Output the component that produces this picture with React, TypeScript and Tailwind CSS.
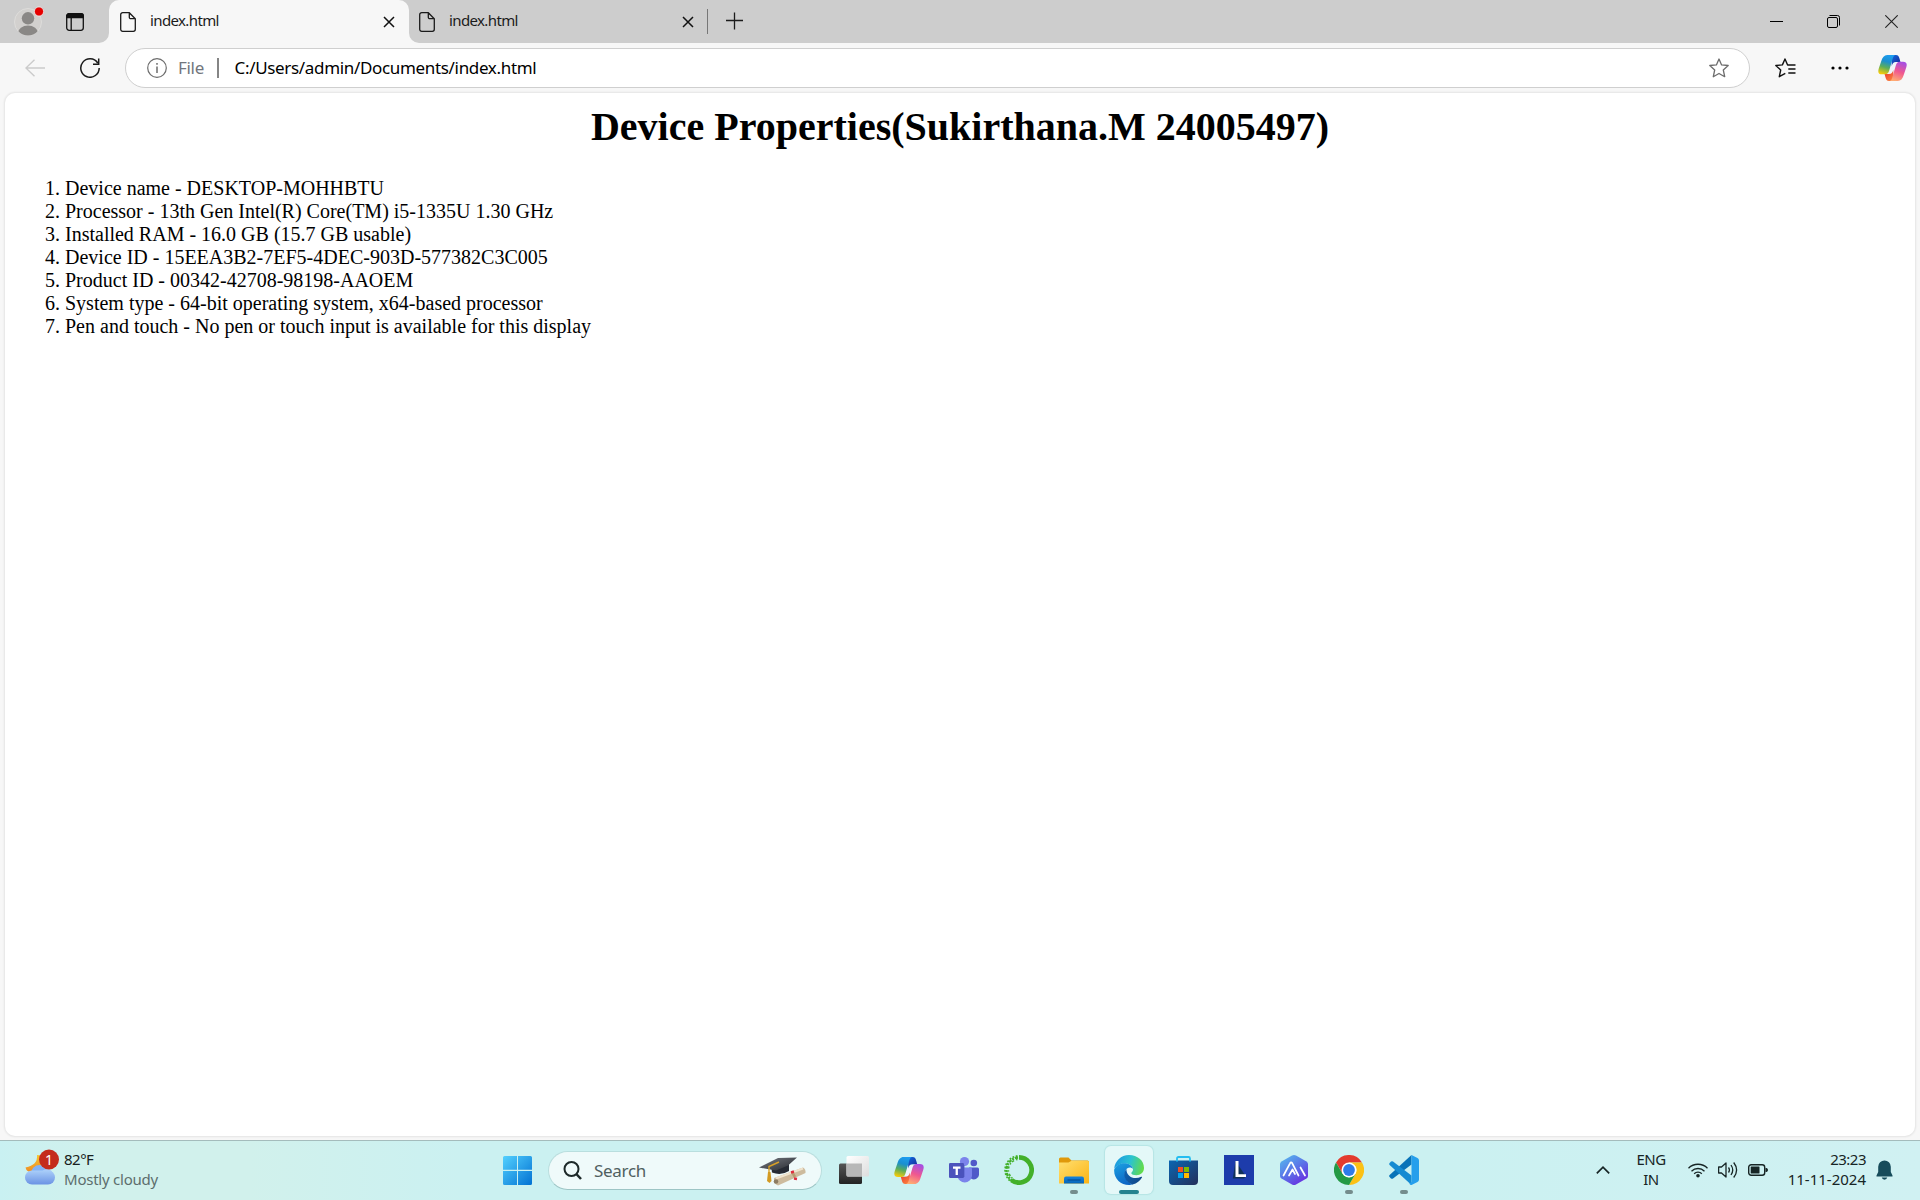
import type { ReactNode } from "react";

const UI = "font-['Noto_Sans',sans-serif]";

function CopilotIcon({ id, className }: { id: string; className: string }) {
  return (
    <svg viewBox="0 0 30 28" className={className} fill="none">
      <defs>
        <linearGradient id={id + "a"} x1="10" y1="0" x2="4" y2="20" gradientUnits="userSpaceOnUse">
          <stop offset="0" stopColor="#1d9df0" />
          <stop offset=".35" stopColor="#1b8fd0" />
          <stop offset=".65" stopColor="#5cae5a" />
          <stop offset="1" stopColor="#f6cb0a" />
        </linearGradient>
        <linearGradient id={id + "b"} x1="24" y1="8" x2="17" y2="27" gradientUnits="userSpaceOnUse">
          <stop offset="0" stopColor="#a84fe0" />
          <stop offset=".5" stopColor="#f0588f" />
          <stop offset="1" stopColor="#ffab72" />
        </linearGradient>
        <linearGradient id={id + "c"} x1="15" y1="0" x2="22" y2="7" gradientUnits="userSpaceOnUse">
          <stop offset="0" stopColor="#1268dc" />
          <stop offset="1" stopColor="#1637a8" />
        </linearGradient>
        <linearGradient id={id + "d"} x1="8" y1="19" x2="14" y2="27" gradientUnits="userSpaceOnUse">
          <stop offset="0" stopColor="#ee4030" />
          <stop offset="1" stopColor="#f9803f" />
        </linearGradient>
      </defs>
      <path d="M12 8.500H19L17.500 19.500H11Z" fill="#eef4fb" />
      <path d="M14 .5H18.500C21 .5 21.600 2 22.300 4.500L23.200 7.800H18.500C16 7.800 15 9 14.200 12Z" fill={`url(#${id}c)`} />
      <path d="M16 27.500H11.500C9 27.500 8.400 26 7.700 23.500L6.800 20.200H11.500C14 20.200 15 19 15.800 16Z" fill={`url(#${id}d)`} />
      <path d="M18 .5H9.500C6.500 .5 4.500 3 3.500 6.500L.8 14.500C-.6 18.800 1 20.500 4 20.500H7.500C9.800 20.500 10.800 19 11.500 16.800L15 5C15.700 2.500 16.300 .9 18 .5Z" fill={`url(#${id}a)`} />
      <path d="M12 27.500H20.500C23.500 27.500 25.500 25 26.500 21.500L29.200 13.500C30.600 9.200 29 7.500 26 7.500H22.500C20.200 7.500 19.200 9 18.500 11.200L15 23C14.300 25.500 13.700 27.100 12 27.500Z" fill={`url(#${id}b)`} />
    </svg>
  );
}

function FileIcon() {
  return (
    <svg viewBox="0 0 16 20" className="mt-px h-5 w-4 shrink-0" fill="none" stroke="#1b1b1b" strokeWidth="1.300">
      <path d="M2.700 .7H9.300L15.300 6.700V17.300A2 2 0 0 1 13.300 19.300H2.700A2 2 0 0 1 .7 17.300V2.700A2 2 0 0 1 2.700 .7ZM9.300 .7V5.200A1.500 1.500 0 0 0 10.800 6.700H15.300" />
    </svg>
  );
}

function TabClose() {
  return (
    <svg viewBox="0 0 12 12" className="h-3 w-3 shrink-0" stroke="#111" strokeWidth="1.500">
      <path d="M1 1 11 11M11 1 1 11" />
    </svg>
  );
}

function TabStrip() {
  return (
    <div className="flex h-[43px] bg-[#cdcdcd]">
      <div className="flex w-[109px] items-center rounded-br-[10px]">
        <svg viewBox="0 0 32 32" className="ml-[13px] h-8 w-8 shrink-0">
          <clipPath id="avatar"><circle cx="15" cy="16" r="13.500" /></clipPath>
          <circle cx="15" cy="16" r="13.500" fill="#d2d0ce" stroke="#dedddb" />
          <circle cx="15" cy="12.300" r="6.200" fill="#8a8886" />
          <ellipse cx="15" cy="27" rx="10" ry="7.500" fill="#8a8886" clipPath="url(#avatar)" />
          <circle cx="26" cy="5.500" r="4.600" fill="#e60000" stroke="#eee" strokeWidth=".8" />
        </svg>
        <svg viewBox="0 0 18 18" className="ml-[21px] h-[18px] w-[18px] shrink-0" fill="none" stroke="#111" strokeWidth="1.300">
          <rect x=".7" y=".7" width="16.600" height="16.600" rx="2.500" />
          <path d="M.7 4.500V3A2.300 2.300 0 0 1 3 .7H15A2.300 2.300 0 0 1 17.300 3V4.500Z" fill="#111" />
          <path d="M5.200 4V17" />
        </svg>
      </div>
      <div className="relative flex w-[300px] items-center rounded-t-[10px] bg-[#f7f7f7] pr-[14px] pl-[11px]">
        <svg viewBox="0 0 10 10" className="absolute bottom-0 -left-[10px] h-[10px] w-[10px]" fill="#f7f7f7"><path d="M10 0V10H0A10 10 0 0 0 10 0Z" /></svg>
        <svg viewBox="0 0 10 10" className="absolute -right-[10px] bottom-0 h-[10px] w-[10px]" fill="#f7f7f7"><path d="M0 0V10H10A10 10 0 0 1 0 0Z" /></svg>
        <FileIcon />
        <span className={`${UI} ml-[14px] flex-1 pb-[2px] text-[15px] tracking-[-0.620px] text-[#1b1b1b]`}>index.html</span>
        <TabClose />
      </div>
      <div className="flex w-[298px] items-center pr-[13px] pl-[10px]">
        <FileIcon />
        <span className={`${UI} ml-[14px] flex-1 pb-[2px] text-[15px] tracking-[-0.620px] text-[#1b1b1b]`}>index.html</span>
        <TabClose />
      </div>
      <div className="mt-[9px] h-[25px] w-px bg-[#777]" />
      <svg viewBox="0 0 18 18" className="mt-3 ml-[18px] h-[18px] w-[18px]" stroke="#1b1b1b" strokeWidth="1.300"><path d="M8.500 .5V17.500M0 8.500H17" /></svg>
      <div className="ml-auto flex items-center gap-[44px] pr-[22px]">
        <svg viewBox="0 0 13 13" className="-ml-px h-[13px] w-[13px]" stroke="#000"><path d="M0 6.500H13" /></svg>
        <svg viewBox="0 0 13 13" className="h-[13px] w-[13px]" fill="none" stroke="#000">
          <rect x=".5" y="2.500" width="10" height="10" rx="1.500" />
          <path d="M2.500 .5H10.500A2 2 0 0 1 12.500 2.500V10.500" />
        </svg>
        <svg viewBox="0 0 13 13" className="ml-px h-[13px] w-[13px]" stroke="#222" strokeWidth="1.100"><path d="M.3 .3 12.700 12.700M12.700 .3 .3 12.700" /></svg>
      </div>
    </div>
  );
}

function Toolbar() {
  return (
    <div className="flex h-[49px] items-center pt-px">
      <svg viewBox="0 0 20 18" className="ml-[25px] h-[18px] w-5" fill="none" stroke="#cbcbcb" strokeWidth="1.400"><path d="M9.500 .7 .9 9 9.500 17.300M.9 9H20" /></svg>
      <svg viewBox="0 0 20 20" className="ml-[35px] h-5 w-5" fill="none" stroke="#1b1b1b" strokeWidth="1.500">
        <path d="M17.700 5A9.200 9.200 0 1 0 19.200 10M18.700 .5V6.200H13" />
      </svg>
      <div className="ml-[25px] flex h-10 w-[1625px] items-center rounded-full border border-[#cfcfcf] bg-white pr-5 pl-[21px]">
        <svg viewBox="0 0 20 20" className="h-5 w-5" fill="none" stroke="#6c6c6c" strokeWidth="1.200">
          <circle cx="10" cy="10" r="9.300" />
          <path d="M10 8.500V15M10 5V6.700" strokeWidth="1.500" />
        </svg>
        <span className={`${UI} ml-[11px] w-[27px] text-[17px] tracking-[-0.300px] whitespace-nowrap text-[#72767d]`}>File</span>
        <div className="ml-[12px] h-5 w-[1.500px] bg-[#858585]" />
        <span className={`${UI} ml-[16px] flex-1 text-[17px] tracking-[-0.330px] text-black`}>C:/Users/admin/Documents/index.html</span>
        <svg viewBox="0 0 20 20" className="h-5 w-5" fill="none" stroke="#6c6c6c" strokeWidth="1.300" strokeLinejoin="round">
          <path d="M10 1 12.600 6.900 19.200 7.500 14.300 12 15.700 18.700 10 15.500 4.300 18.700 5.700 12 .8 7.500 7.400 6.900Z" />
        </svg>
      </div>
      <svg viewBox="0 0 21 20" className="ml-[25px] h-5 w-[21px]" fill="none" stroke="#111" strokeWidth="1.400" strokeLinejoin="round">
        <path d="M13.200 7H12.600L10 1 7.400 6.900 .8 7.500 5.700 12 4.300 18.700 10.300 15.400M12.500 7H20.500M13.300 11H20.500M13.300 15H20.500" />
      </svg>
      <svg viewBox="0 0 18 4" className="ml-[35px] h-1 w-[18px]"><circle cx="2" cy="2" r="1.600" /><circle cx="9" cy="2" r="1.600" /><circle cx="16" cy="2" r="1.600" /></svg>
      <CopilotIcon id="top" className="ml-[29px] h-[28px] w-[29px]" />
    </div>
  );
}

const properties = [
  "Device name - DESKTOP-MOHHBTU",
  "Processor - 13th Gen Intel(R) Core(TM) i5-1335U 1.30 GHz",
  "Installed RAM - 16.0 GB (15.7 GB usable)",
  "Device ID - 15EEA3B2-7EF5-4DEC-903D-577382C3C005",
  "Product ID - 00342-42708-98198-AAOEM",
  "System type - 64-bit operating system, x64-based processor",
  "Pen and touch - No pen or touch input is available for this display",
];

function Page() {
  return (
    <main className="mx-[5px] h-[1043px] rounded-[10px] bg-white px-[10px] pt-[11px] font-['Liberation_Serif',serif] text-black shadow-[0_0_2px_1px_rgba(0,0,0,0.080)]">
      <h1 className="text-center text-[40px] leading-[46px] font-bold">Device Properties(Sukirthana.M 24005497)</h1>
      <ol className="mt-[27px] list-decimal pl-[50px] text-[20px] leading-[23px]">
        {properties.map((p) => <li key={p}>{p}</li>)}
      </ol>
    </main>
  );
}

function TaskButton({ children, indicator, active }: { children: ReactNode; indicator?: boolean; active?: boolean }) {
  return (
    <div className={`relative flex h-12 w-12 items-center justify-center rounded-[6px] ${active ? "bg-[#e4f8f8] shadow-[0_0_1px_1px_rgba(120,190,190,0.250)]" : ""}`}>
      {children}
      {indicator && <span className={`absolute bottom-0 h-1 rounded-full ${active ? "w-5 bg-[#24828f]" : "w-2 bg-[#748c8c]"}`} />}
    </div>
  );
}

function TaskApps() {
  return (
    <div className="ml-[8px] flex gap-[7px]">
      <TaskButton>
        <svg viewBox="0 0 30 30" className="h-[30px] w-[30px]">
          <defs>
            <linearGradient id="tvd" x2="0" y2="1"><stop stopColor="#555" /><stop offset="1" stopColor="#232323" /></linearGradient>
            <linearGradient id="tvl" x2="1" y2="1"><stop stopColor="#fff" /><stop offset="1" stopColor="#ddd" /></linearGradient>
          </defs>
          <rect y="8.500" width="23" height="20.500" rx="1.500" fill="url(#tvd)" />
          <rect x="7.500" y="1" width="22.500" height="20.500" rx="1.500" fill="url(#tvl)" />
          <path d="M7.500 8.500H23V21.500H9Q7.500 21.500 7.500 20Z" fill="#b7b7b7" />
        </svg>
      </TaskButton>
      <TaskButton><CopilotIcon id="task" className="h-[29px] w-[30px]" /></TaskButton>
      <TaskButton>
        <svg viewBox="0 0 30 28" className="h-7 w-[30px]">
          <circle cx="24.800" cy="7" r="3.300" fill="#5059c9" />
          <path d="M20 11.500H28.500Q30 11.500 30 13V19A5 5 0 0 1 22 22.500Z" fill="#5059c9" />
          <circle cx="15.500" cy="5.500" r="4.600" fill="#7b83eb" />
          <path d="M9 11.500H21.500Q23 11.500 23 13V20A7.300 7.300 0 0 1 8.500 20Z" fill="#7b83eb" />
          <path d="M9 9H15.500V21H9Z" fill="#5961c8" />
          <rect y="7" width="15" height="15" rx="1.200" fill="#4b53bc" />
          <path d="M4 10.500H11.500V12.700H8.900V19H6.600V12.700H4Z" fill="#fff" />
        </svg>
      </TaskButton>
      <TaskButton>
        <svg viewBox="0 0 30 30" className="h-[30px] w-[30px]" fill="none" stroke="#43b02a">
          <path d="M15 2.400A12.600 12.600 0 1 1 7.500 25.100" strokeWidth="4.700" />
          <path d="M14 2.500A12.600 12.600 0 0 0 8 25.500" strokeWidth="2.400" strokeDasharray="3.200 1.100 2 .9" />
          <path d="M13.500 .9A14.200 14.200 0 0 0 6 25.800" strokeWidth="1.600" strokeDasharray="1.800 1.600" />
          <path d="M13.500 4.500A10.600 10.600 0 0 0 9 23.700" strokeWidth="1.500" strokeDasharray="1.400 2.200 2.400 1.600" />
        </svg>
      </TaskButton>
      <TaskButton indicator>
        <svg viewBox="0 0 30 27" className="h-[27px] w-[30px]">
          <defs><linearGradient id="fold" x2="1" y2="1"><stop stopColor="#ffdf70" /><stop offset="1" stopColor="#fbb414" /></linearGradient>
          <linearGradient id="foldb" x2="0" y2="1"><stop stopColor="#1683dc" /><stop offset="1" stopColor="#0665b8" /></linearGradient></defs>
          <path d="M0 2Q0 .5 1.500 .5H9.500L12.500 3.500H28.500Q30 3.500 30 5V10H0Z" fill="#e0990b" />
          <path d="M0 5.500H9.500L12.500 3.800H28.500Q30 3.800 30 5.500V26.500H0Z" fill="url(#fold)" />
          <path d="M5 26.500V21.500Q5 19.500 7 19.500H23Q25 19.500 25 21.500V26.500Z" fill="url(#foldb)" />
          <path d="M8.500 23H21.500" stroke="#064f96" strokeWidth="1.200" />
        </svg>
      </TaskButton>
      <TaskButton indicator active>
        <svg viewBox="0 0 30 30" className="h-[30px] w-[30px]">
          <defs>
            <linearGradient id="eg" x1="2" y1="6" x2="29" y2="14" gradientUnits="userSpaceOnUse"><stop stopColor="#1d9ce0" /><stop offset=".5" stopColor="#2bc3d0" /><stop offset="1" stopColor="#63dc48" /></linearGradient>
            <linearGradient id="eb" x1="4" y1="8" x2="14" y2="29" gradientUnits="userSpaceOnUse"><stop stopColor="#1b9ee0" /><stop offset="1" stopColor="#0b63c4" /></linearGradient>
            <linearGradient id="ed" x1="10" y1="18" x2="26" y2="24" gradientUnits="userSpaceOnUse"><stop stopColor="#0d5fb0" /><stop offset="1" stopColor="#114a8b" /></linearGradient>
          </defs>
          <path d="M.2 13.500C1 6 7 0 15 0 23.500 0 30 5.500 30 13 30 17.500 26.500 20.200 22.500 20.200 19.500 20.200 17.300 19.300 17.300 18.200 17.300 17.200 19 16.800 19 14.500 19 11 15.500 8.500 11 8.500 6 8.500 2.500 10.500 .2 13.500Z" fill="url(#eg)" />
          <path d="M.2 14.500C1.500 11 5.500 8.300 10.500 8.300 15 8.300 18.500 10.800 19 14 17.500 12 15 12 13 13.500 9.500 16.500 9.500 26 19 29.300 17.500 29.900 16 30 15 30 6.500 30-.5 23 .2 14.500Z" fill="url(#eb)" />
          <path d="M12.500 14C8.500 18 9.500 26.500 18.500 29.400 23 28.300 26.200 25.500 28 22.400 28.300 21.700 27.800 21.500 27.200 21.800 20 25.300 12 21.300 12.500 14Z" fill="url(#ed)" />
        </svg>
      </TaskButton>
      <TaskButton>
        <svg viewBox="0 0 30 30" className="h-[30px] w-[30px]">
          <defs><linearGradient id="st" x2="1" y2="1"><stop stopColor="#0a66b2" /><stop offset="1" stopColor="#24305a" /></linearGradient></defs>
          <path d="M0 5.500H29V26A4 4 0 0 1 25 30H4A4 4 0 0 1 0 26Z" fill="url(#st)" />
          <path d="M8 6.500V3.500Q8 2 9.500 2H19.500Q21 2 21 3.500V6.500" fill="none" stroke="#23bdf0" strokeWidth="1.800" />
          <path d="M9 12H14V17H9Z" fill="#f25022" /><path d="M15 12H20V17H15Z" fill="#7fba00" />
          <path d="M9 18H14V23H9Z" fill="#00a4ef" /><path d="M15 18H20V23H15Z" fill="#ffb900" />
        </svg>
      </TaskButton>
      <TaskButton>
        <svg viewBox="0 0 30 30" className="h-[30px] w-[30px]">
          <path d="M0 0H30V30H0Z" fill="#1d3cab" />
          <path d="M11.500 6 8.800 23.500H20L22 21.500Z" fill="#103158" />
          <path d="M11.500 6H14.500V19.200H22V22H11.500Z" fill="#fff" />
        </svg>
      </TaskButton>
      <TaskButton>
        <svg viewBox="0 0 28 30" className="h-[30px] w-7">
          <defs><linearGradient id="hex" x1=".1" x2=".8" y2="1"><stop stopColor="#55b9ed" /><stop offset=".5" stopColor="#5b75e8" /><stop offset="1" stopColor="#6a29e0" /></linearGradient></defs>
          <path d="M12 .5Q14-.5 16 .5L26.500 6.500Q28 7.500 28 9V21Q28 22.500 26.500 23.500L16 29.500Q14 30.500 12 29.500L1.500 23.500Q0 22.500 0 21V9Q0 7.500 1.500 6.500Z" fill="url(#hex)" />
          <path d="M3.500 20.500 10 8.300Q11 6.300 12.300 8.300L18.500 20.500M9 20.500 12.500 14.500 15 19M20.500 12.500 25 20.500" fill="none" stroke="#fff" strokeWidth="1.700" strokeLinecap="round" strokeLinejoin="round" />
        </svg>
      </TaskButton>
      <TaskButton indicator>
        <svg viewBox="0 0 30 30" className="h-[30px] w-[30px]">
          <path d="M2 7.500A15 15 0 0 1 28 7.500H15L8.500 18.700Z" fill="#e33b2e" />
          <path d="M28 7.500A15 15 0 0 1 15 30L21.500 18.700A7.500 7.500 0 0 0 21.500 11.300L15 7.500Z" fill="#fbc116" />
          <path d="M2 7.500A15 15 0 0 0 15 30L21.500 18.700 15 22.500 8.500 18.700Z" fill="#249a45" />
          <circle cx="15" cy="15" r="7.500" fill="#fff" /><circle cx="15" cy="15" r="5.900" fill="#2f7bea" />
        </svg>
      </TaskButton>
      <TaskButton indicator>
        <svg viewBox="0 0 30 30" className="h-[30px] w-[30px]">
          <path d="M22.500 0V9.500L4 23.500Q3 24.200 2 23.400L.6 22Q-.3 21 .6 20Z" fill="#0873b8" />
          <path d="M.6 8Q-.2 9 .6 10L22.500 30V20.500L4 6.500Q3 5.800 2 6.600Z" fill="#158bd2" />
          <path d="M22.500 0 28.500 2.900Q30 3.700 30 5.500V24.500Q30 26.300 28.500 27.100L22.500 30Q21 30 20.300 28.500L22.500 27Z" fill="#269fec" />
        </svg>
      </TaskButton>
    </div>
  );
}

function Taskbar() {
  return (
    <div className={`${UI} flex h-[60px] items-center border-t border-[#a4bcbc] bg-[linear-gradient(90deg,#c9f1f2_0%,#d1f1ec_5%,#d1f1ec_13%,#cbf1f1_24%,#cbf1f1_75%,#d0f1f2_100%)] pb-px`}>
      <div className="flex w-[502px] items-center pl-[24px]">
        <svg viewBox="0 0 36 38" className="mb-[6px] h-[38px] w-9 shrink-0">
          <defs>
            <linearGradient id="cl" x2="0" y2="1"><stop stopColor="#a9cef9" /><stop offset="1" stopColor="#6b93e4" /></linearGradient>
            <linearGradient id="mn" x2="0" y2="1"><stop stopColor="#f7c52e" /><stop offset="1" stopColor="#ed8b24" /></linearGradient>
          </defs>
          <path d="M13 7Q14 17 1.500 19.500 2.500 24 8 24.500L22 20V8Z" fill="url(#mn)" />
          <circle cx="15.500" cy="25.500" r="8.500" fill="#83b2f4" /><circle cx="23" cy="27.500" r="6.500" fill="#a9caf8" />
          <rect x="1" y="22.500" width="30" height="14" rx="7" fill="url(#cl)" />
          <circle cx="25" cy="11.500" r="10" fill="#c42b1c" />
          <text x="25" y="16.500" textAnchor="middle" fill="#fff" fontSize="14" fontFamily="Noto Sans">1</text>
        </svg>
        <div className="mb-[3px] ml-[4px] text-[15px] leading-5">
          <div className="tracking-[-0.500px] text-[#182020]">82°F</div>
          <div className="tracking-[-0.230px] text-[#5d6e6d]">Mostly cloudy</div>
        </div>
      </div>
      <svg viewBox="0 0 30 30" className="ml-px h-[30px] w-[30px]">
        <defs><linearGradient id="win" x1="0" y1="0" x2="30" y2="30" gradientUnits="userSpaceOnUse"><stop stopColor="#55d2ff" /><stop offset="1" stopColor="#0070d2" /></linearGradient></defs>
        <path d="M1.500 1H14V14.800H0V2.500Q0 1 1.500 1ZM15 1H27.500Q29 1 29 2.500V14.800H15ZM0 16H14V30H1.500Q0 30 0 28.500ZM15 16H29V28.500Q29 30 27.500 30H15Z" fill="url(#win)" />
      </svg>
      <div className="mt-px ml-[15px] flex h-[39px] w-[274px] items-center rounded-full border border-[#b9dede] border-b-[#9dc5c5] bg-[#effafa] pr-[15px] pl-[14px]">
        <svg viewBox="0 0 19 19" className="h-[19px] w-[19px]" fill="none" stroke="#1d2929" strokeWidth="2"><circle cx="8.500" cy="8" r="7" /><path d="M13.300 13 18 18" strokeWidth="2.500" /></svg>
        <span className="ml-[12px] flex-1 text-[17px] tracking-[-0.300px] text-[#4f6060]">Search</span>
        <svg viewBox="0 0 48 30" className="h-[30px] w-12">
          <defs><linearGradient id="cap" x2="1" y2="1"><stop stopColor="#777b82" /><stop offset="1" stopColor="#25282e" /></linearGradient></defs>
          <path d="M13 9 31 6V15Q23 20 14 16.500Z" fill="#262b34" />
          <path d="M1 11.500 20 2 39 1.500 30 9.500 18 14.500Z" fill="url(#cap)" />
          <path d="M21 6 11 10.500V18" fill="none" stroke="#d9a126" strokeWidth="1.400" />
          <path d="M10 16H12.500L13.500 25 11.500 27 9 25Z" fill="#d39a22" />
          <path d="M16 22 45 11.500Q48 13 47.500 17L20 29.500Q15.500 28 16 22Z" fill="#cdbb9e" />
          <path d="M18 22.500 45 12.500" stroke="#efe3cd" strokeWidth="2" />
          <circle cx="18" cy="25.500" r="2.300" fill="#8d7c62" />
          <path d="M34 16 37 21" stroke="#b89b6e" strokeWidth="2.500" />
          <path d="M33 16.500 36 15.500M36 22.500 39 23" stroke="#df2e3f" strokeWidth="2.500" />
        </svg>
      </div>
      <TaskApps />
      <div className="ml-auto flex items-center pr-[27px] text-[15px] leading-5 text-[#172525]">
        <svg viewBox="0 0 14 8" className="h-2 w-[14px]" fill="none" stroke="#172525" strokeWidth="1.700"><path d="M.8 7.300 7 1.200 13.200 7.300" /></svg>
        <div className="mb-[2px] ml-[26px] w-[30px] text-center tracking-[-0.500px]">ENG<br />IN</div>
        <svg viewBox="0 0 20 16" className="ml-[22px] h-4 w-5" fill="none" stroke="#172525" strokeWidth="1.300">
          <path d="M.5 6.200A13.400 13.400 0 0 1 19.500 6.200M3.500 9.200A9.200 9.200 0 0 1 16.500 9.200M6.200 11.700A5.300 5.300 0 0 1 13.800 11.700" />
          <circle cx="10" cy="13.800" r="1.800" fill="#172525" stroke="none" />
        </svg>
        <svg viewBox="0 0 20 18" className="ml-[10px] h-[18px] w-5" fill="none" stroke="#172525" strokeWidth="1.300" strokeLinejoin="round">
          <path d="M.6 6H3.500L8 2V16L3.500 12H.6ZM10.500 6.500Q12.300 9 10.500 11.500M13 4Q16.500 9 13 14M15.700 1.500Q21.500 9 15.700 16.500" />
        </svg>
        <svg viewBox="0 0 20 12" className="ml-[10px] h-3 w-5"><rect x=".7" y=".7" width="16" height="10.600" rx="2.500" fill="none" stroke="#172525" strokeWidth="1.400" /><rect x="2.700" y="2.500" width="8.800" height="7" rx=".5" fill="#172525" /><path d="M17.500 4H18.500Q20 4.500 20 6T18.500 8H17.500Z" fill="#172525" /></svg>
        <div className="mb-[3px] ml-[18px] w-[80px] text-right whitespace-nowrap">
          <div className="tracking-[-0.500px]">23:23</div>
          <div>11-11-2024</div>
        </div>
        <svg viewBox="0 0 17 20" className="ml-[10px] h-5 w-[17px]" fill="#174c5b"><path d="M8.500 .5A6.300 6.300 0 0 1 14.800 6.800V12L16.500 15.500V16.500H.5V15.500L2.200 12V6.800A6.300 6.300 0 0 1 8.500 .5ZM5.700 17.500H11.300A2.900 2.900 0 0 1 5.700 17.500Z" /></svg>
      </div>
    </div>
  );
}

export default function App() {
  return (
    <div className="flex h-[1200px] w-[1920px] flex-col overflow-hidden bg-[#f7f7f7]">
      <TabStrip />
      <Toolbar />
      <div className="flex-1 pt-px"><Page /></div>
      <Taskbar />
    </div>
  );
}
